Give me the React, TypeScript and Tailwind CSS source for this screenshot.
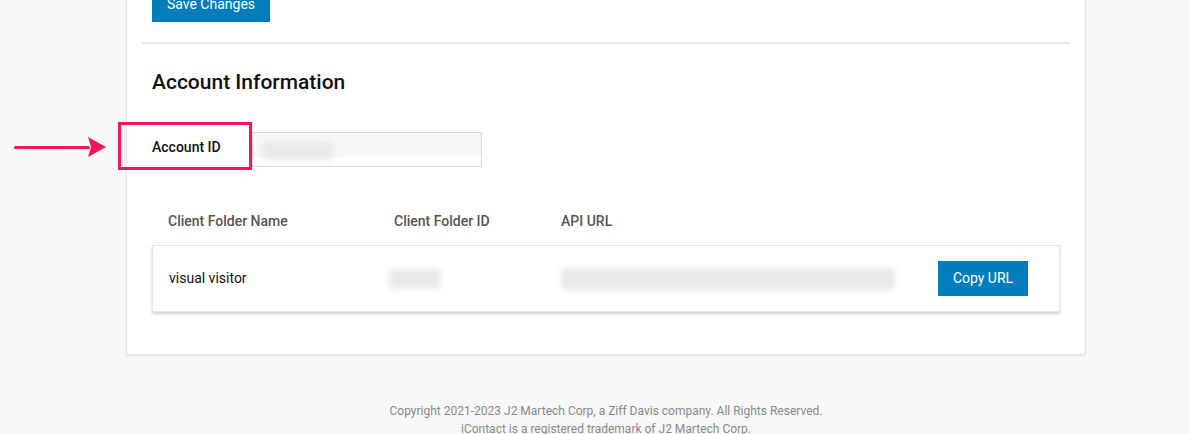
import React from "react";

function Blur({ w, h, className = "" }: { w: string; h: string; className?: string }) {
  return <div className={`${w} ${h} ${className} bg-[#e9e9e9] blur-[3px] rounded-sm`} />;
}

export default function App() {
  return (
    <div className="min-h-[434px] w-[1190px] bg-[#f8f8f9] font-['Roboto',sans-serif] overflow-hidden">
      <div className="ml-[126px] w-[960px] -mt-[14px]">
        <div className="bg-white border border-[#dfe4ec] border-t-0 px-[15px] pb-[42px] shadow-[0_1px_2px_rgba(180,190,210,0.35)]">
          <div className="px-[10px]">
            <button className="h-[36px] w-[118px] bg-[#007dba] text-white text-[14px]">Save Changes</button>
          </div>
          <div className="mt-[20px] h-[2px] bg-[#e6e6ee]" />
          <div className="px-[10px]">
            <h2 className="mt-[24px] text-[21px] leading-[28px] font-medium text-[#111]">Account Information</h2>
            <div className="relative mt-[36px] flex items-center h-[35px]">
              <div className="absolute left-[-34px] top-[-10px] w-[134px] h-[48px] border-[3px] border-[#f7145a]" />
              <div className="absolute left-[-138px] top-[5px] flex items-center">
                <div className="w-[76px] h-[3px] bg-[#f7145a] rounded-full" />
                <svg width="18" height="20" viewBox="0 0 18 20" className="-ml-[2px]">
                  <polygon points="0,0 18,10 0,20 3,10" fill="#f7145a" />
                </svg>
              </div>
              <span className="w-[100px] text-[14px] font-medium text-[#111] -mt-[4px]">Account ID</span>
              <div className="w-[230px] h-[35px] border border-[#d9d9d9] bg-white">
                <div className="h-[24px] bg-[#f7f7f7] flex items-center pl-[10px] pt-[12px]">
                  <Blur w="w-[70px]" h="h-[18px]" />
                </div>
              </div>
            </div>
            <div className="mt-[44px] flex px-[16px] text-[14px] font-medium text-[#555] leading-[20px]">
              <div className="w-[226px]">Client Folder Name</div>
              <div className="w-[167px]">Client Folder ID</div>
              <div>API URL</div>
            </div>
            <div className="mt-[14px] w-[908px] h-[67px] flex items-center px-[16px] border border-[#e1e5ee] shadow-[0_2px_3px_rgba(0,0,0,0.18)] bg-white text-[14px] text-[#111]">
              <div className="w-[220px]">visual visitor</div>
              <div className="w-[172px]">
                <Blur w="w-[52px]" h="h-[20px]" />
              </div>
              <div className="w-[377px]">
                <Blur w="w-[334px]" h="h-[22px]" />
              </div>
              <button className="w-[90px] h-[35px] bg-[#007dba] text-white text-[14px]">Copy URL</button>
            </div>
          </div>
        </div>
        <div className="mt-[47px] text-center text-[12px] leading-[18px] text-[#888]">
          <p>Copyright 2021-2023 J2 Martech Corp, a Ziff Davis company. All Rights Reserved.</p>
          <p>iContact is a registered trademark of J2 Martech Corp.</p>
        </div>
      </div>
    </div>
  );
}
